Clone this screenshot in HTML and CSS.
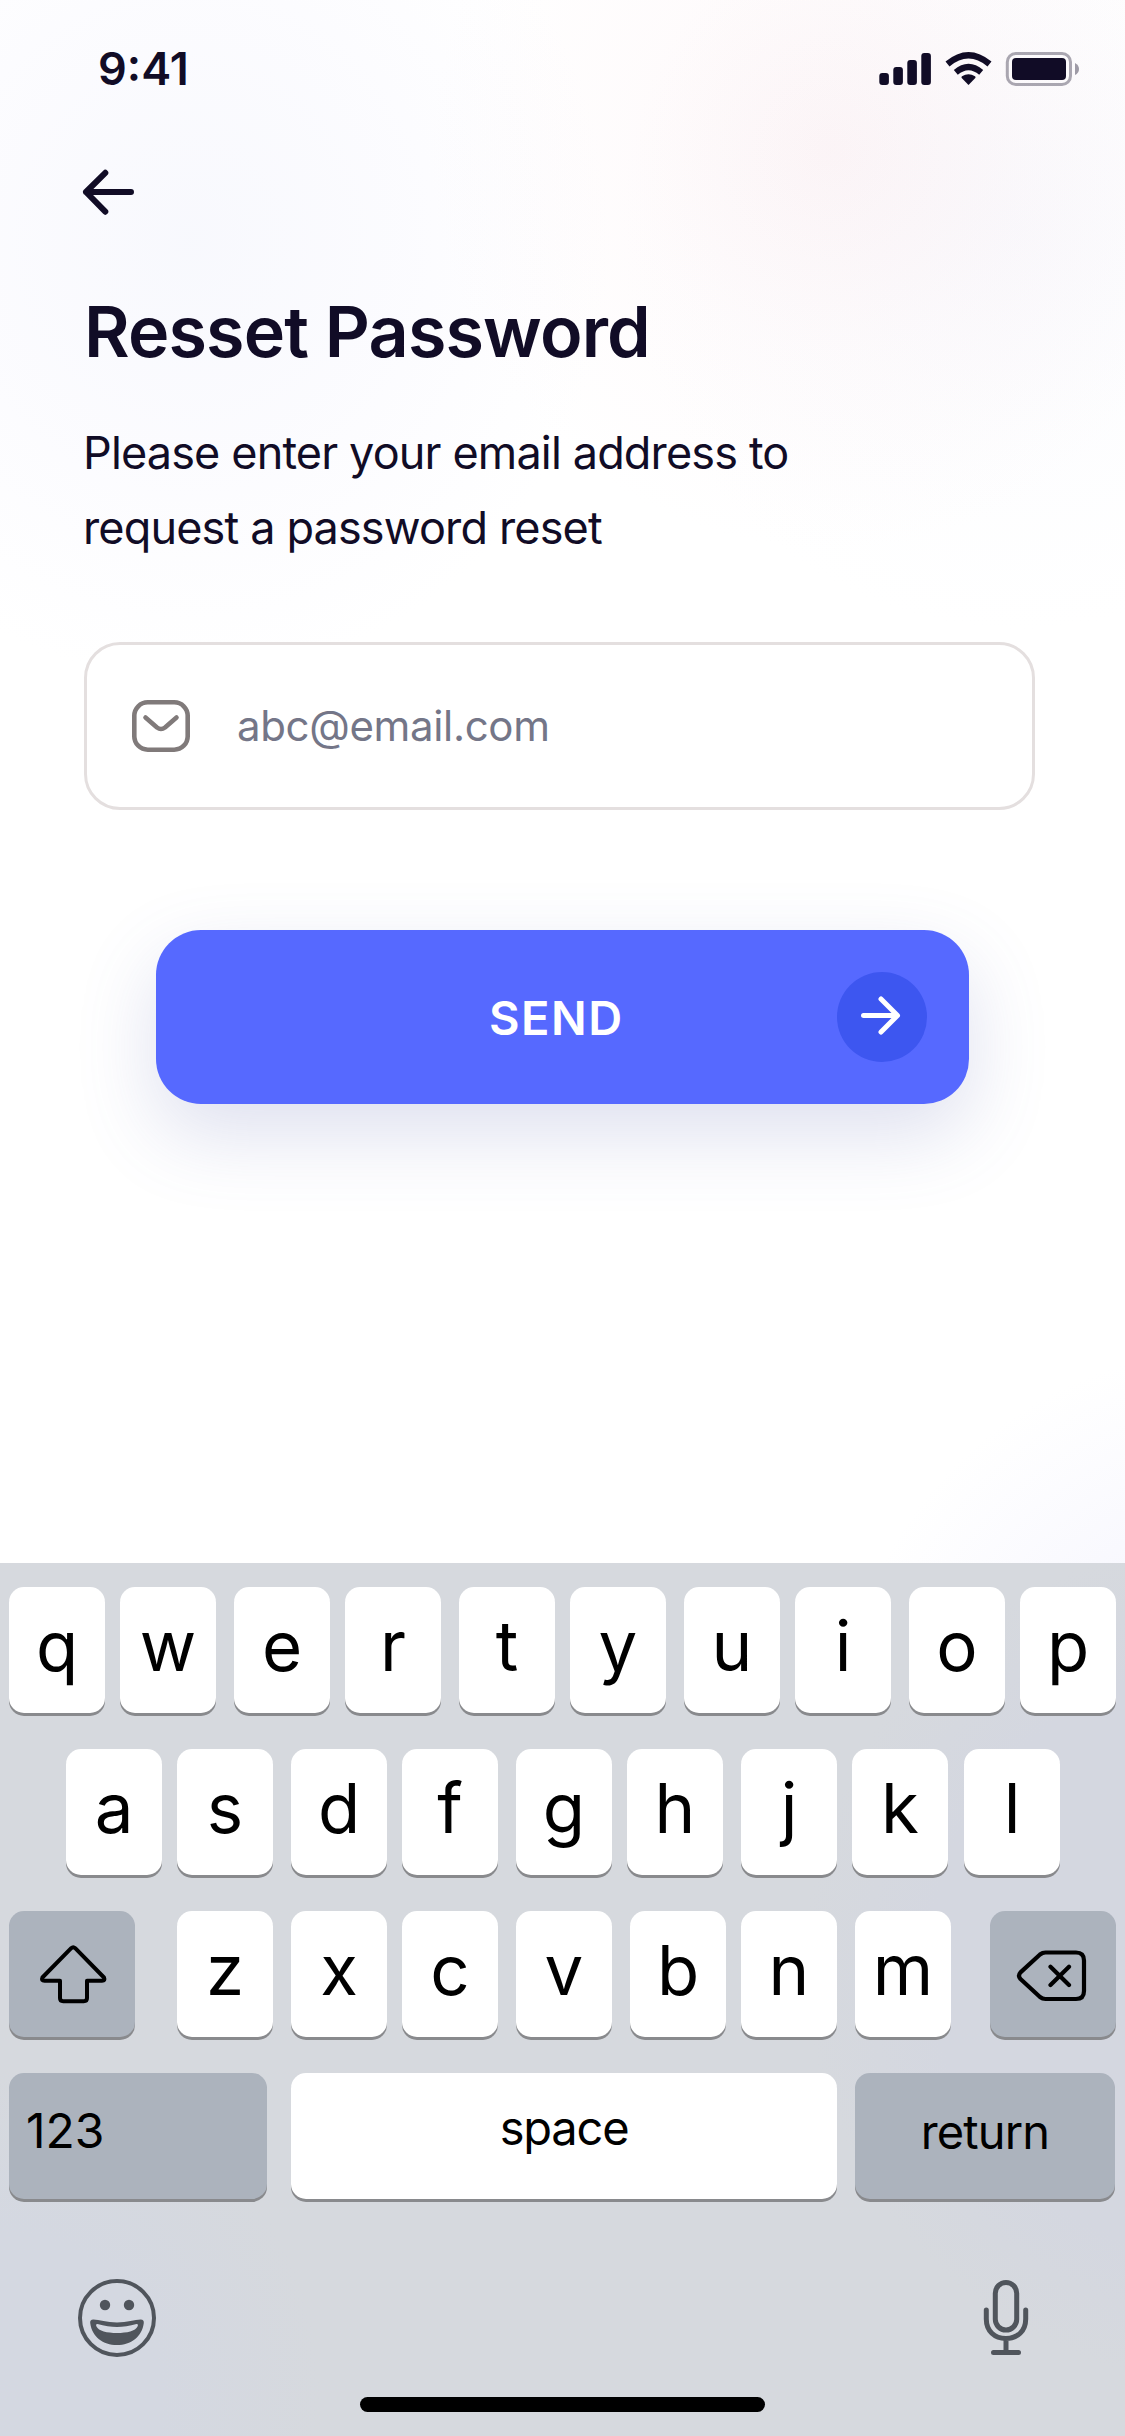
FILE: index.html
```html
<!DOCTYPE html>
<html lang="en">
<head>
<meta charset="utf-8">
<meta name="viewport" content="width=device-width, initial-scale=1">
<title>Resset Password</title>
<link rel="stylesheet" href="styles.css">
</head>
<body>
<div class="screen">
  <header class="status-bar">
    <span class="status-time">9:41</span>
    <svg class="status-icons" width="202" height="36" viewBox="878 51 202 36" fill="#110C26">
      <rect x="879.3" y="73" width="9.6" height="12" rx="3"/>
      <rect x="893.3" y="67" width="9.6" height="18" rx="3"/>
      <rect x="907.3" y="60" width="9.6" height="25" rx="3"/>
      <rect x="921.3" y="53" width="9.6" height="32" rx="3"/>
      <path d="M968.5 85 L961.7 78 Q961 77 962 76.300 Q968.500 72.300 975 76.300 Q976 77 975.300 78 Z"/>
      <g fill="none" stroke="#110C26" stroke-width="6.200">
        <path d="M955.800 72.300 Q968.500 61.600 981.200 72.300"/>
        <path d="M947.500 64 Q968.500 46.500 989.500 64"/>
      </g>
      <rect x="1007.300" y="53.500" width="63.200" height="31" rx="8.500" fill="none" stroke="#110C26" stroke-opacity=".35" stroke-width="3"/>
      <rect x="1012" y="58" width="54" height="22" rx="4"/>
      <path d="M1075 63 Q1079 65 1079 69 Q1079 73 1075 75 Z" opacity=".4"/>
    </svg>
  </header>

  <main class="content">
    <a class="back" href="#" aria-label="Back">
      <svg width="56" height="48" viewBox="0 0 56 48" fill="none" stroke="#110C26" stroke-width="6" stroke-linecap="round" stroke-linejoin="round"><path d="M51 24H6M25.300 4.800L6 24L25.300 43.700"/></svg>
    </a>
    <h1 class="title">Resset Password</h1>
    <p class="hint">Please enter your email address to<br>request a password reset</p>

    <label class="field">
      <svg width="60" height="54" viewBox="0 0 60 54" fill="none" stroke="#807A7A" stroke-width="4.600" stroke-linecap="round" stroke-linejoin="round"><rect x="3.300" y="3.300" width="53.400" height="47.400" rx="13.500"/><path d="M14.500 18.500L26 28.500Q30 31.500 34 28.500L45.500 18.500"/></svg>
      <span class="placeholder">abc@email.com</span>
    </label>

    <div class="send">
      <span class="send-label">SEND</span>
      <span class="send-icon">
        <svg width="48" height="48" viewBox="0 0 48 48" fill="none" stroke="#fff" stroke-width="5" stroke-linecap="round" stroke-linejoin="round"><path d="M5.500 22.500H39M23 6L39.500 22.500L23 39"/></svg>
      </span>
    </div>
  </main>

  <section class="keyboard">
    <div class="row">
      <span class="key">q</span><span class="key">w</span><span class="key wide-gap">e</span><span class="key">r</span><span class="key wide-gap">t</span><span class="key">y</span><span class="key wide-gap">u</span><span class="key">i</span><span class="key wide-gap">o</span><span class="key">p</span>
    </div>
    <div class="row row-home">
      <span class="key">a</span><span class="key">s</span><span class="key wide-gap">d</span><span class="key">f</span><span class="key wide-gap">g</span><span class="key">h</span><span class="key wide-gap">j</span><span class="key">k</span><span class="key key-last">l</span>
    </div>
    <div class="row">
      <span class="key key-dark key-shift">
        <svg width="72" height="62" viewBox="0 0 72 62" fill="none" stroke="#000" stroke-width="4" stroke-linejoin="round"><path d="M34.200 5.200Q36.200 3.300 38.200 5.200L67 34.500Q68.500 37.800 65 37.800H50V55Q50 58.200 46.800 58.200H26.200Q23 58.200 23 55V37.800H7.500Q3.900 37.800 5.400 34.500Z"/></svg>
      </span>
      <span class="key">z</span><span class="key wide-gap">x</span><span class="key">c</span><span class="key wide-gap">v</span><span class="key wide-gap">b</span><span class="key">n</span><span class="key wide-gap">m</span>
      <span class="key key-dark key-delete">
        <svg width="72" height="56" viewBox="0 0 72 56" fill="none" stroke="#000" stroke-width="4.200" stroke-linecap="round" stroke-linejoin="round"><path d="M29.500 4.500H60Q68 4.500 68 12.500V43Q68 51 60 51H29.500Q26.500 51 24 49L4.500 31Q1.500 27.700 4.500 24.400L24 6.500Q26.500 4.500 29.500 4.500ZM34.500 18.800L53 37M53 18.800L34.500 37"/></svg>
      </span>
    </div>
    <div class="row">
      <span class="key key-dark key-numbers">123</span>
      <span class="key key-space">space</span>
      <span class="key key-dark key-return">return</span>
    </div>
    <div class="toolbar">
      <svg width="80" height="80" viewBox="0 0 80 80" fill="#50555C"><circle cx="40" cy="40" r="37" fill="none" stroke="#50555C" stroke-width="4"/><circle cx="28" cy="27" r="5.200"/><circle cx="52" cy="27" r="5.200"/><path fill-rule="evenodd" d="M16.500 41.600C22 42 30 44.500 40 44.500C50 44.500 58 42 63.500 41.600C66 41.500 67 43 66.800 45C65 59 54 67 40 67C26 67 15 59 13.200 45C13 43 14 41.500 16.500 41.600ZM20.500 46Q18.300 45.800 19.500 48.500C21.500 53 30 55 40 55C50 55 58.500 53 60.500 48.500Q61.700 45.800 59.500 46Q49 49 40 49Q31 49 20.500 46Z"/></svg>
      <svg width="46" height="78" viewBox="0 0 46 78" fill="none" stroke="#50555C" stroke-width="5" stroke-linecap="round"><rect x="12.300" y="3.500" width="21.400" height="47.500" rx="10.700"/><path d="M3.300 31V40C3.300 52 11.500 59.500 23 59.500C34.500 59.500 42.700 52 42.700 40V31M23 60V73M10.500 73.500H35.500"/></svg>
    </div>
    <div class="home-bar"></div>
  </section>
</div>
</body>
</html>
```
FILE: styles.css
```css
* {
  box-sizing: border-box;
}

body {
  margin: 0;
  font-family: "Inter", "Liberation Sans", sans-serif;
  color: #110c26;
}

.screen {
  width: 1125px;
  height: 2436px;
  display: flex;
  flex-direction: column;
  overflow: hidden;
  background:
    radial-gradient(circle 400px at 830px 150px, rgba(252, 238, 240, 0.55), rgba(253, 245, 247, 0.35) 50%, rgba(255, 255, 255, 0)),
    radial-gradient(circle 400px at 1020px 230px, rgba(245, 246, 252, 0.5), rgba(248, 249, 253, 0.3) 50%, rgba(255, 255, 255, 0)),
    radial-gradient(ellipse 420px 440px at 190px 240px, rgba(246, 247, 253, 0.8), rgba(249, 249, 254, 0.6) 50%, rgba(255, 255, 255, 0)),
    radial-gradient(circle 390px at 1230px 1740px, #f1f1fd, #fff),
    #fff;
  background-blend-mode: multiply;
}

.status-bar {
  height: 136px;
  padding: 2px 45px 0 98px;
  display: flex;
  align-items: center;
  justify-content: space-between;
}

.status-time {
  font-size: 45px;
  font-weight: 600;
  line-height: 54px;
}

.content {
  display: flex;
  flex-direction: column;
}

.back {
  height: 48px;
  margin: 32px 0 0 80px;
}

.back svg {
  display: block;
}

.title {
  margin: 76px 0 0 84px;
  font-size: 70px;
  font-weight: 560;
  line-height: 80px;
  letter-spacing: -0.85px;
}

.hint {
  margin: 43px 0 0 83px;
  font-size: 45px;
  font-weight: 380;
  line-height: 75px;
  letter-spacing: -0.85px;
}

.field {
  width: 951px;
  height: 168px;
  margin: 77px 0 0 84px;
  padding: 0 44px;
  display: flex;
  align-items: center;
  gap: 46px;
  border: 3px solid #e4dfdf;
  border-radius: 36px;
  background: #fff;
}

.placeholder {
  font-size: 42px;
  font-weight: 380;
  line-height: 60px;
  letter-spacing: -0.35px;
  color: #747688;
}

.send {
  width: 813px;
  height: 174px;
  margin: 120px 0 0 156px;
  padding-right: 42px;
  display: grid;
  grid-template-columns: 1fr 90px;
  align-items: center;
  border-radius: 45px;
  background: #5669ff;
  box-shadow: 0 30px 80px rgba(90, 100, 175, 0.2);
}

.send-label {
  padding: 1px 0 0 333px;
  font-size: 47px;
  font-weight: 560;
  line-height: 60px;
  letter-spacing: 1.5px;
  color: #fff;
}

.send-icon {
  width: 90px;
  height: 90px;
  display: grid;
  place-items: center;
  border-radius: 50%;
  background: #3d56f0;
}

.keyboard {
  height: 873px;
  margin-top: auto;
  padding: 24px 9px 0;
  display: flex;
  flex-direction: column;
  gap: 36px;
  color: #000;
  background:
    radial-gradient(circle 420px at 1225px 400px, #d4d7e0 70%, rgba(212, 215, 224, 0)),
    radial-gradient(circle 320px at 0 830px, #d4d8e1 50%, rgba(212, 216, 225, 0)),
    #d6d9de;
}

.row {
  display: flex;
  gap: 15px;
}

.row-home {
  padding-left: 57px;
}

.key {
  width: 96px;
  height: 126px;
  border-radius: 15px;
  background: #fff;
  box-shadow: 0 3px 0 #898a8d;
  font-size: 69px;
  line-height: 118px;
  text-align: center;
}

.wide-gap {
  margin-left: 3px;
}

.key-last {
  margin-left: 1px;
}

.key-dark {
  background: #acb3bd;
}

.key-shift,
.key-delete {
  width: 126px;
  display: grid;
  place-items: center;
}

.key-shift {
  margin-right: 27px;
  padding-left: 2px;
}

.key-delete {
  margin-left: 24px;
  padding: 3px 2px 0 0;
}

.key-numbers,
.key-space,
.key-return {
  font-size: 46px;
  letter-spacing: -0.6px;
}

.key-numbers {
  width: 258px;
  padding-left: 17px;
  font-size: 48px;
  line-height: 115px;
  letter-spacing: 0;
  text-align: left;
}

.key-space {
  width: 546px;
  margin-left: 9px;
  font-size: 47px;
  line-height: 110px;
  letter-spacing: -1.2px;
}

.key-return {
  width: 260px;
  margin-left: 3px;
  font-size: 47px;
  line-height: 117px;
  letter-spacing: -0.9px;
}

.toolbar {
  margin-top: 42px;
  padding: 0 87px 0 68px;
  display: flex;
  align-items: center;
  justify-content: space-between;
}

.toolbar svg {
  position: relative;
  top: 1px;
}

.home-bar {
  width: 405px;
  height: 15px;
  margin: 4px 0 0 351px;
  border-radius: 8px;
  background: #000;
}
```
